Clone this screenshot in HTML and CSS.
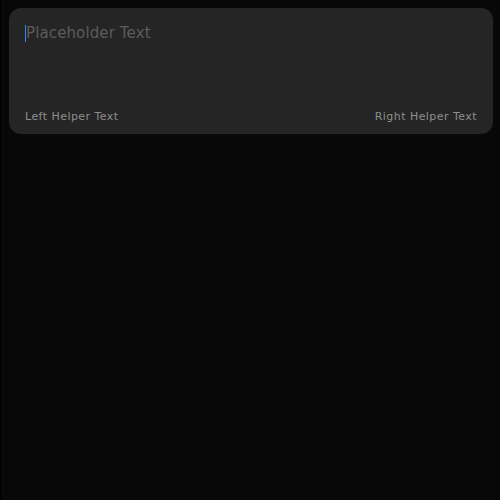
FILE: index.html
```html
<!DOCTYPE html>
<html>
<head>
<meta charset="utf-8">
<link rel="stylesheet" href="styles.css">
</head>
<body>
<div class="edge"></div>
<main class="page">
  <section class="field">
    <div class="input-row"><span class="caret"></span><span class="placeholder">Placeholder Text</span></div>
    <div class="helpers">
      <span class="helper">Left Helper Text</span>
      <span class="helper">Right Helper Text</span>
    </div>
  </section>
</main>
</body>
</html>
```
FILE: styles.css
```css
html, body {
  margin: 0;
  padding: 0;
  height: 100%;
  background: #080808;
}
body {
  display: flex;
  font-family: "DejaVu Sans", sans-serif;
}
.edge {
  width: 1px;
  background: #000;
  flex: none;
}
.page {
  flex: 1;
  padding: 8px 7px 0 8px;
}
.field {
  background: #252525;
  border-radius: 12px;
  height: 126px;
  box-sizing: border-box;
  padding: 15px 16px 9px 16px;
  display: flex;
  flex-direction: column;
  justify-content: space-between;
}
.input-row {
  display: flex;
  align-items: center;
  height: 20px;
}
.caret {
  width: 1px;
  height: 17px;
  background: #3b82f6;
}
.placeholder {
  color: #5c5c5c;
  font-size: 15px;
  letter-spacing: 0.12px;
}
.helpers {
  display: flex;
  justify-content: space-between;
}
.helper {
  color: #8e8e8e;
  font-size: 11px;
  letter-spacing: 0.45px;
  line-height: 16px;
}
```
